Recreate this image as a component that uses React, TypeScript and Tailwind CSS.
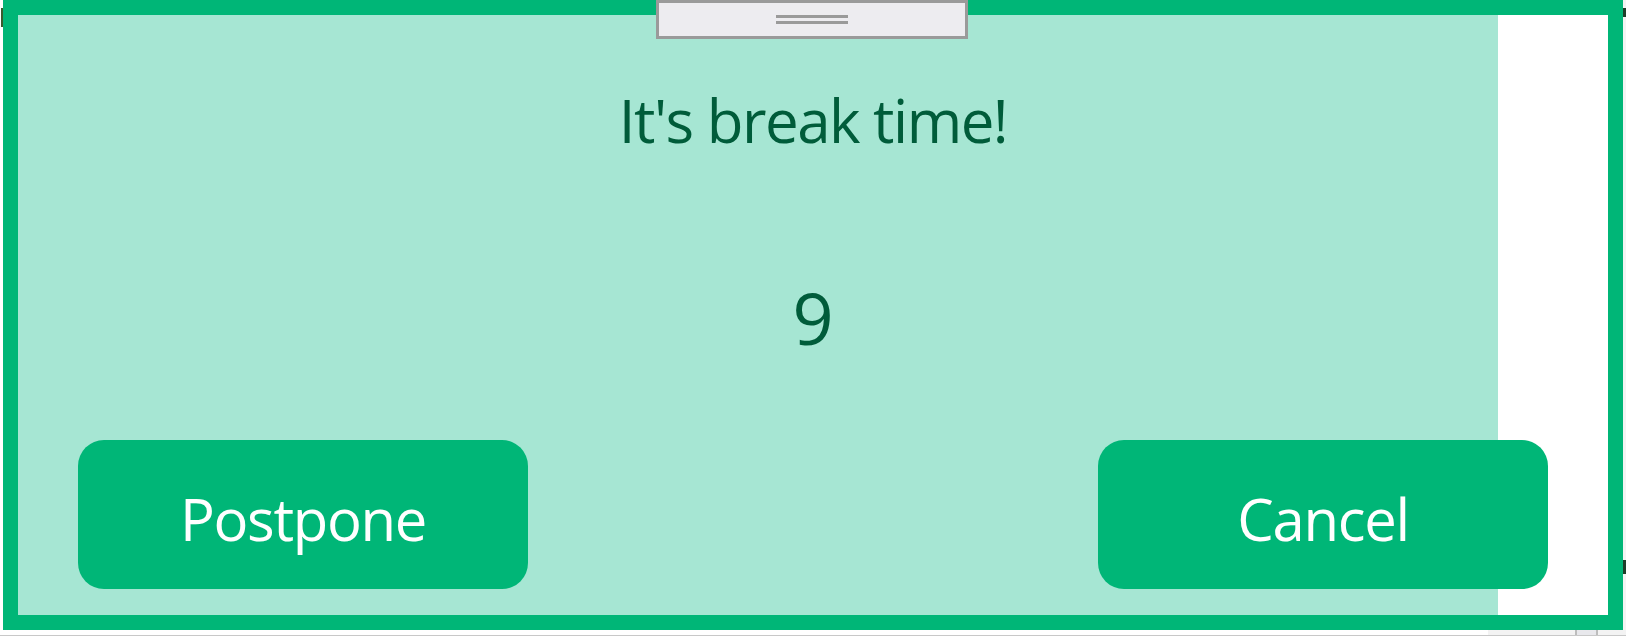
import React from "react";

function ActionButton({ label }: { label: string }) {
  return (
    <button className="w-[450px] h-[149px] rounded-[26px] bg-[#00b677] text-white text-[58px] leading-none tracking-[-1.3px] flex items-center justify-center pt-[8px]">
      {label}
    </button>
  );
}

export default function App() {
  return (
    <div
      className="relative w-[1626px] h-[636px] bg-white overflow-hidden flex flex-col"
      style={{ fontFamily: '"Open Sans", "Noto Sans", sans-serif' }}
    >
      <div className="flex h-[630px]">
        {/* left background sliver */}
        <div className="w-[3px] flex flex-col pt-[8px]">
          <div className="ml-[1px] w-[2px] h-[19px] bg-[#3b5a2e]" />
        </div>

        {/* window */}
        <div className="w-[1620px] h-[630px] border-[15px] border-[#00b677]">
          <div className="flex flex-col h-full bg-[linear-gradient(to_right,#a6e6d3_1480px,#ffffff_1480px)]">
            <div className="mt-[75px] h-[60px] leading-none text-center text-[60px] tracking-[-1.5px] text-[#005c3a]">
              It's break time!
            </div>
            <div className="mt-[131px] h-[72px] leading-none text-center text-[72px] text-[#005c3a]">
              9
            </div>
            <div className="mt-[87px] flex justify-between px-[60px]">
              <ActionButton label="Postpone" />
              <ActionButton label="Cancel" />
            </div>
          </div>
        </div>

        {/* right background sliver */}
        <div className="w-[3px] bg-[#f3f3f3] flex flex-col justify-between pt-[8px] pb-[56px]">
          <div className="w-[3px] h-[9px] bg-[#1f3d2a]" />
          <div className="w-[3px] h-[14px] bg-[#1f3d2a]" />
        </div>
      </div>

      {/* bottom background strip */}
      <div className="flex h-[5px]">
        <div className="w-[1488px] bg-white" />
        <div className="w-[87px] bg-[#f3f3f3]" />
        <div className="w-[23px] bg-[#e8e8ec] border-x-2 border-[#bdbdbd]" />
        <div className="flex-1 bg-[#f3f3f3]" />
      </div>
      <div className="h-px bg-[#c8c8c8]" />

      {/* drag handle overlapping the window's top border */}
      <div className="absolute left-[656px] top-0 w-[312px] h-[39px] border-[3px] border-[#9a9a9a] bg-[#edecf0] flex flex-col items-center pt-[12px] gap-[3px]">
        <div className="w-[72px] h-[3px] bg-[#9a9a9a]" />
        <div className="w-[72px] h-[3px] bg-[#9a9a9a]" />
      </div>
    </div>
  );
}
